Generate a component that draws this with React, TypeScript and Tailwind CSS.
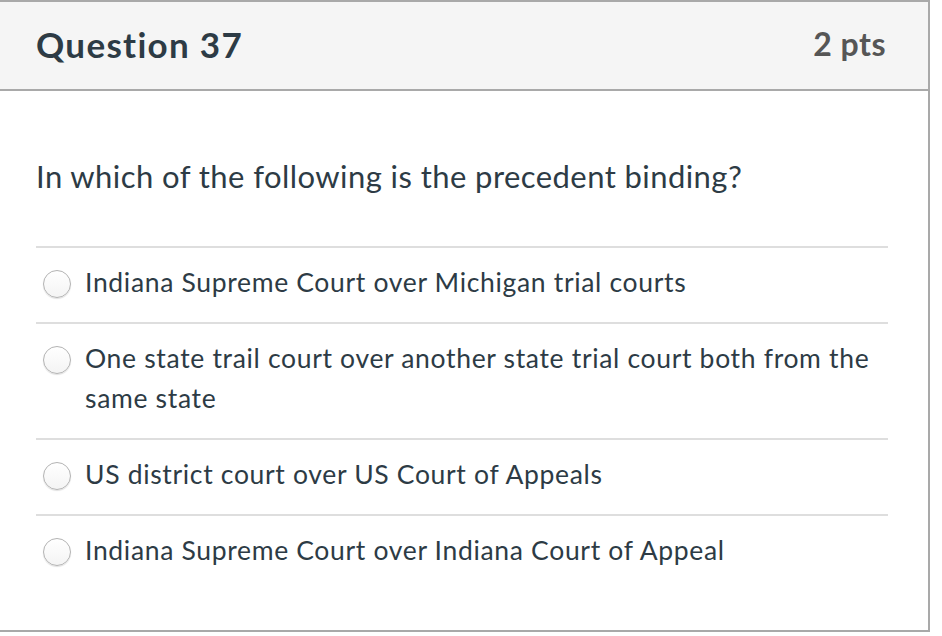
const answers = [
    "Indiana Supreme Court over Michigan trial courts",
    "One state trail court over another state trial court both from the same state",
    "US district court over US Court of Appeals",
    "Indiana Supreme Court over Indiana Court of Appeal",
]

function Radio() {
    return (
        <span className="mt-[8px] ml-[7px] h-[28px] w-[28px] shrink-0 rounded-full border border-[#b3b3b3] bg-gradient-to-b from-white to-[#f4f4f4] shadow-[0_1px_1px_rgba(0,0,0,0.12)]" />
    )
}

export default function App() {
    return (
        <div className="h-[636px] w-[942px] bg-white font-['Lato','Liberation_Sans',sans-serif] text-[#2d3b45]">
            <div className="flex h-[632px] w-[930px] flex-col border-t-2 border-r-2 border-b-2 border-[#a9a9a9]">
                <div className="flex h-[89px] shrink-0 items-center justify-between border-b-2 border-[#a9a9a9] bg-[#f5f5f5] pl-[36px] pr-[42px]">
                    <h2 className="mb-[3px] text-[35px] leading-[1.2] font-bold tracking-[1.3px]">Question 37</h2>
                    <div className="mb-[2px] text-[32px] leading-[1.2] font-bold tracking-[0.5px] text-[#565656]">2 pts</div>
                </div>

                <div className="pl-[36px] pr-[40px]">
                    <p className="pt-[63px] pb-[47px] text-[31px] leading-[45px] tracking-[0.43px]">
                        In which of the following is the precedent binding?
                    </p>

                    <ul>
                        {answers.map((a) => (
                            <li key={a} className="flex items-start gap-[14px] border-t-2 border-[#dedede] pt-[14px] pb-[20px]">
                                <Radio />
                                <span className="text-[26.5px] leading-[40px] tracking-[0.67px]">{a}</span>
                            </li>
                        ))}
                    </ul>
                </div>
            </div>
        </div>
    )
}
